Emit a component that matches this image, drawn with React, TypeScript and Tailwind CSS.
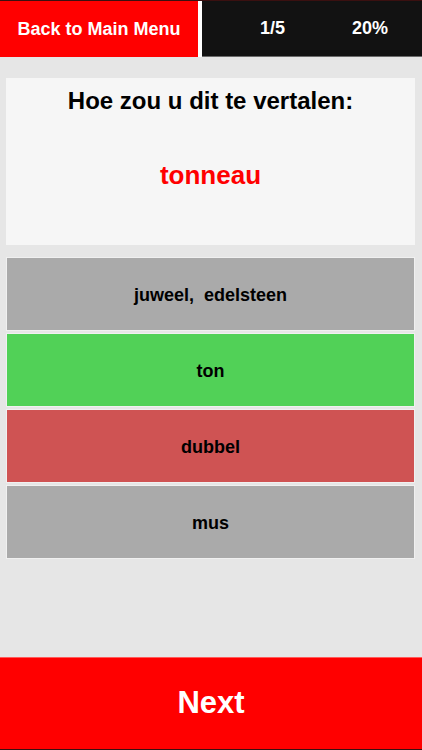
const answers = [
  { label: 'juweel,\u00a0 edelsteen', bg: 'bg-[#aaaaaa]' },
  { label: 'ton', bg: 'bg-[#51d157]' },
  { label: 'dubbel', bg: 'bg-[#cf5353]' },
  { label: 'mus', bg: 'bg-[#aaaaaa]' },
];

const App = () => {
  return (
    <div className="h-[750px] w-[422px] flex flex-col bg-[#e6e6e6] font-['Liberation_Sans',Arial,sans-serif] font-bold">
      {/* Top bar */}
      <header className="flex h-[57px] border-t border-[#3a1010] bg-white">
        <button className="w-[198px] bg-[#ff0000] text-white text-[18px] flex items-center justify-center">
          Back to Main Menu
        </button>
        <div className="ml-[4px] flex-1 bg-[#121212] text-white text-[18px] flex items-center border-b border-[#6a6a6a]">
          <span className="ml-[58px]">1/5</span>
          <span className="ml-[67px]">20%</span>
        </div>
      </header>

      {/* Question */}
      <section className="mt-[21px] ml-[6px] w-[409px] h-[167px] bg-[#f6f6f6] flex flex-col items-center pt-[9px]">
        <h1 className="text-[24px] leading-[28px] text-black">Hoe zou u dit te vertalen:</h1>
        <p className="mt-[45px] text-[26px] leading-[30px] text-[#ff0000]">tonneau</p>
      </section>

      {/* Answers */}
      <div className="mt-[12px] ml-[6px] w-[409px] flex flex-col gap-[2px]">
        {answers.map((a) => (
          <button
            key={a.label}
            className={`h-[74px] border border-[#f0f0f0] ${a.bg} text-black text-[18px] flex items-center justify-center pt-[3px]`}
          >
            {a.label}
          </button>
        ))}
      </div>

      {/* Next */}
      <button className="mt-auto h-[93px] bg-[#ff0000] border-t border-[#ff5a5a] border-b border-b-[#3a1010] text-white text-[31px] flex items-center justify-center">
        Next
      </button>
    </div>
  );
};

export default App;
